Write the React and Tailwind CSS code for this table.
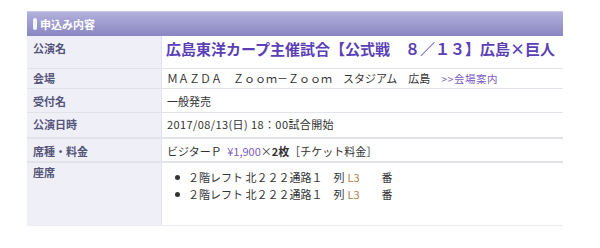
import React from "react";

const font = { fontFamily: '"Noto Sans CJK JP", "Noto Sans", sans-serif' };

export default function App() {
  return (
    <div className="w-[600px] h-[248px] bg-white pt-[11px] pl-[27px]" style={font}>
      <div className="w-[536px]">
        <div className="h-[25px] flex items-center bg-gradient-to-b from-[#b2b0dc] to-[#8a86c2] border-t border-[#c8c8e4]">
          <span className="ml-[6px] w-[4px] h-[12px] rounded-[2px] bg-[#f4f4fc]" />
          <span className="ml-[3px] text-[11px] font-bold text-white">申込み内容</span>
        </div>
        <div className="flex border-b border-[#e2e2ea]">
          <div className="w-[135px] shrink-0 bg-[#efeff8] border-r border-[#e2e2ee] pl-[6px] pt-[4px] h-[32px] text-[11px] font-bold text-[#55557a]">
            公演名
          </div>
          <div className="flex-1 pl-[4px] pt-[2px] text-[15px] font-bold text-[#5a3fb6] whitespace-nowrap">
            広島東洋カープ主催試合【公式戦　８／１３】広島×巨人
          </div>
        </div>
        <div className="flex border-b border-[#e2e2ea] h-[20px]">
          <div className="w-[135px] shrink-0 bg-[#efeff8] border-r border-[#e2e2ee] pl-[6px] pt-[1px] text-[11px] font-bold text-[#55557a]">会場</div>
          <div className="flex-1 pl-[5px] pt-[1px] text-[11px] text-[#333] whitespace-nowrap">
            ＭＡＺＤＡ　Ｚｏｏｍ－Ｚｏｏｍ　スタジアム　広島　<span className="text-[10.5px] tracking-[0.5px] text-[#7a5cc0]">&gt;&gt;会場案内</span>
          </div>
        </div>
        <div className="flex border-b border-[#e2e2ea] h-[24px]">
          <div className="w-[135px] shrink-0 bg-[#efeff8] border-r border-[#e2e2ee] pl-[6px] pt-[4px] text-[11px] font-bold text-[#55557a]">受付名</div>
          <div className="flex-1 pl-[5px] pt-[4px] text-[11px] text-[#333]">一般発売</div>
        </div>
        <div className="flex border-b-2 border-[#e2e2ea] h-[26px]">
          <div className="w-[135px] shrink-0 bg-[#efeff8] border-r border-[#e2e2ee] pl-[6px] pt-[3px] text-[11px] font-bold text-[#55557a]">公演日時</div>
          <div className="flex-1 pl-[5px] pt-[3px] text-[11px] tracking-[0.4px] text-[#333]">2017/08/13(日) 18：00試合開始</div>
        </div>
        <div className="flex border-b-2 border-[#e2e2ea] h-[24px]">
          <div className="w-[135px] shrink-0 bg-[#efeff8] border-r border-[#e2e2ee] pl-[6px] pt-[4px] text-[11px] font-bold text-[#55557a]">席種・料金</div>
          <div className="flex-1 pl-[5px] pt-[4px] text-[11px] text-[#333] whitespace-nowrap">
            ビジターＰ <span className="ml-[3px] text-[#7a5cc0]">¥1,900</span>×<span className="font-bold">2枚</span>［チケット料金］
          </div>
        </div>
        <div className="flex border-b border-[#ececf0] h-[63px]">
          <div className="w-[135px] shrink-0 bg-[#efeff8] border-r border-[#e2e2ee] pl-[6px] pt-[1px] text-[11px] font-bold text-[#55557a]">座席</div>
          <ul className="flex-1 pl-[13px] pt-[6px] text-[11px] text-[#333] leading-[17px]">
            {[0, 1].map((i) => (
              <li key={i} className="flex items-center whitespace-nowrap">
                <span className="w-[5px] h-[5px] rounded-full bg-[#333] mr-[8px]" />
                ２階レフト 北２２２通路１　列 <span className="text-[#b0804a] ml-[3px]">L3</span>
                <span className="ml-[22px]">番</span>
              </li>
            ))}
          </ul>
        </div>
      </div>
    </div>
  );
}
